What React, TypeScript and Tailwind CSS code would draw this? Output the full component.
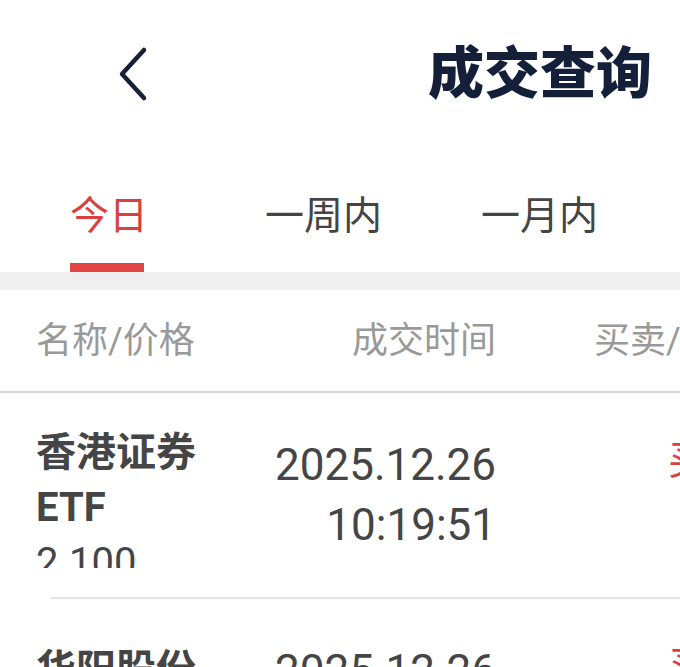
import React from 'react';

const cjk = "font-['Roboto','Noto_Sans_CJK_SC',sans-serif]";

type Trade = { name: string[]; price: string; date: string; time: string; side: string; top: string };

const trades: Trade[] = [
  { name: ['香港证券', 'ETF'], price: '2.100', date: '2025.12.26', time: '10:19:51', side: '买入', top: 'mt-[32px]' },
  { name: ['华阳股份'], price: '8.920', date: '2025.12.26', time: '10:05:33', side: '买入', top: 'mt-[43px]' },
];

function TradeRow({ t }: { t: Trade }) {
  return (
    <div className="flex h-[204px] items-center">
      <div className={`w-[252px] shrink-0 pl-[36px] h-[143px] self-start overflow-hidden ${t.top}`}>
        {t.name.map((n) => (
          <div key={n} className="text-[40px] leading-[55px] font-bold text-[#454545] whitespace-nowrap">
            {n}
          </div>
        ))}
        <div className="text-[40px] leading-[55px] text-[#454545] font-['Roboto',sans-serif]">{t.price}</div>
      </div>
      <div className="w-[244px] shrink-0 text-right font-['Roboto',sans-serif] text-[44px] leading-[60px] text-[#454545]">
        <div>{t.date}</div>
        <div>{t.time}</div>
      </div>
      <div className="pl-[172px] self-start mt-[46px] text-[40px] leading-[44px] text-[#d9403f] whitespace-nowrap">
        {t.side}
      </div>
    </div>
  );
}

export default function App() {
  return (
    <div className={`w-[680px] h-[667px] overflow-hidden bg-white ${cjk}`}>
      {/* Nav bar */}
      <div className="flex items-center justify-between h-[148px] pl-[118px] pr-[28px]">
        <svg width="32" height="56" viewBox="0 0 32 56" fill="none">
          <path d="M26 4 L4 28 L26 52" stroke="#172036" strokeWidth="4.5" strokeLinecap="round" strokeLinejoin="round" />
        </svg>
        <h1 className="text-[56px] font-black text-[#14203a] leading-none">成交查询</h1>
      </div>

      {/* Tabs */}
      <div className="flex h-[124px] items-end pl-[70px]">
        <div className="flex flex-col items-start w-[195px]">
          <span className="text-[39px] leading-[48px] text-[#d9403f]">今日</span>
          <span className="mt-[23px] h-[9px] w-[74px] bg-[#e24343]" />
        </div>
        <div className="flex flex-col w-[216px]">
          <span className="text-[39px] leading-[48px] text-[#444]">一周内</span>
          <span className="mt-[23px] h-[9px]" />
        </div>
        <div className="flex flex-col">
          <span className="text-[39px] leading-[48px] text-[#444]">一月内</span>
          <span className="mt-[23px] h-[9px]" />
        </div>
      </div>
      <div className="h-[18px] bg-[#efefef]" />

      {/* Column header */}
      <div className="flex items-center h-[101px] text-[36px] text-[#999] whitespace-nowrap">
        <div className="w-[252px] shrink-0 pl-[36px]">名称/价格</div>
        <div className="w-[244px] shrink-0 text-right">成交时间</div>
        <div className="pl-[98px]">买卖/状态</div>
      </div>
      <div className="h-[2px] bg-[#d4d4d4]" />

      <TradeRow t={trades[0]} />
      <div className="ml-[51px] h-[2px] bg-[#e3e3e3]" />
      <TradeRow t={trades[1]} />
    </div>
  );
}
